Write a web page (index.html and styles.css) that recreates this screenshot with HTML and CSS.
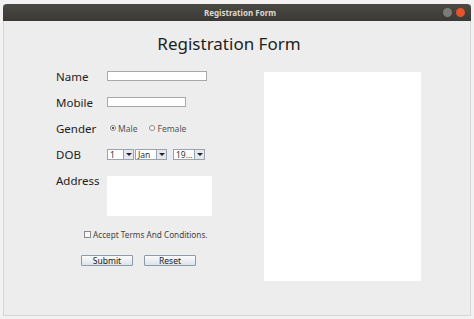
FILE: index.html
```html
<!DOCTYPE html>
<html lang="en">
<head>
    <meta charset="UTF-8">
    <meta name="viewport" content="width=device-width, initial-scale=1.0">
    <title>Registration Form</title>
    <link rel="stylesheet" href="styles.css">
</head>
<body>
    <div class="window">
        <div class="titlebar">
            <span class="titlebar-text">Registration Form</span>
            <div class="titlebar-buttons">
                <span class="tb-btn min"></span>
                <span class="tb-btn close"></span>
            </div>
        </div>

        <div class="content">
            <h1 class="form-title">Registration Form</h1>

            <div class="main">
                <form class="form" id="regForm">
                    <div class="rows">
                        <label class="label">Name</label>
                        <div class="field"><span class="text-input name-input"></span></div>

                        <label class="label">Mobile</label>
                        <div class="field"><span class="text-input mobile-input"></span></div>

                        <label class="label">Gender</label>
                        <div class="field radios">
                            <span class="radio-item"><span class="radio checked"></span>Male</span>
                            <span class="radio-item"><span class="radio"></span>Female</span>
                        </div>

                        <label class="label">DOB</label>
                        <div class="field combos">
                            <span class="combo combo-day"><span class="combo-value">1</span><span class="combo-arrow"></span></span>
                            <span class="combo combo-month"><span class="combo-value">Jan</span><span class="combo-arrow"></span></span>
                            <span class="combo combo-year"><span class="combo-value">19...</span><span class="combo-arrow"></span></span>
                        </div>

                        <label class="label address-label">Address</label>
                        <div class="field address-field"><span class="textarea"></span></div>
                    </div>

                    <div class="terms">
                        <span class="checkbox"></span>
                        <span>Accept Terms And Conditions.</span>
                    </div>

                    <div class="actions">
                        <button type="button" class="btn">Submit</button>
                        <button type="button" class="btn">Reset</button>
                    </div>
                </form>

                <div class="output-panel"></div>
            </div>
        </div>
    </div>
</body>
</html>
```

FILE: styles.css
```css
* {
    margin: 0;
    padding: 0;
    box-sizing: border-box;
}

body {
    width: 474px;
    height: 319px;
    background: #f2f2f2;
    font-family: "Noto Sans", "DejaVu Sans", sans-serif;
    overflow: hidden;
    padding: 4px 3px 3px 3px;
}

.window {
    height: 312px;
    background: #ededed;
    border: 1px solid #d6d6d6;
    border-top: none;
    display: flex;
    flex-direction: column;
}

.titlebar {
    height: 17px;
    background: linear-gradient(to bottom, #4a4944, #3a3935);
    border-radius: 4px 4px 0 0;
    display: flex;
    align-items: center;
    justify-content: center;
    position: relative;
    margin: 0 -1px;
}

.titlebar-text {
    color: #dcd9d2;
    font-size: 8px;
    font-weight: bold;
    margin-left: 6px;
}

.titlebar-buttons {
    position: absolute;
    right: 6px;
    top: 4px;
    display: flex;
    gap: 4px;
}

.tb-btn {
    width: 9px;
    height: 9px;
    border-radius: 50%;
}

.tb-btn.min {
    background: #7c7b76;
}

.tb-btn.close {
    background: #e5542a;
}

.content {
    flex: 1;
    display: flex;
    flex-direction: column;
}

.form-title {
    font-size: 17px;
    font-weight: normal;
    color: #1e1e1e;
    text-align: center;
    line-height: 20px;
    padding-top: 13px;
    margin-bottom: 9px;
    margin-right: 16px;
}

.main {
    display: flex;
    padding-left: 52px;
}

.form {
    width: 208px;
}

.rows {
    display: grid;
    grid-template-columns: 51px auto;
    grid-auto-rows: 26px;
    align-items: center;
}

.label {
    font-size: 11.5px;
    color: #222;
}

.field {
    display: flex;
    align-items: center;
}

.text-input {
    display: block;
    height: 10px;
    background: #fff;
    border: 1px solid #a9a9a9;
}

.name-input {
    width: 100px;
}

.mobile-input {
    width: 79px;
}

.radios {
    font-size: 8.5px;
    color: #555;
    gap: 12px;
    padding-left: 3px;
}

.radio-item {
    display: flex;
    align-items: center;
    gap: 2px;
}

.radio {
    width: 6px;
    height: 6px;
    border: 1px solid #888;
    border-radius: 50%;
    background: #fff;
    position: relative;
}

.radio.checked::after {
    content: "";
    position: absolute;
    left: 1px;
    top: 1px;
    width: 2px;
    height: 2px;
    border-radius: 50%;
    background: #222;
}

.combos {
    gap: 1px;
}

.combo {
    display: flex;
    height: 11px;
    background: #fff;
    border: 1px solid #9aa4b0;
    font-size: 8.5px;
    color: #333;
    line-height: 9px;
}

.combo-value {
    flex: 1;
    padding-left: 2px;
    overflow: hidden;
    white-space: nowrap;
}

.combo-arrow {
    width: 10px;
    background: #e4e8ee;
    border-left: 1px solid #9aa4b0;
    position: relative;
}

.combo-arrow::after {
    content: "";
    position: absolute;
    left: 2px;
    top: 3px;
    border-left: 3px solid transparent;
    border-right: 3px solid transparent;
    border-top: 3px solid #222;
}

.combo-day {
    width: 27px;
}

.combo-month {
    width: 32px;
}

.combo-year {
    width: 32px;
    margin-left: 5px;
}

.address-label,
.address-field {
    align-self: start;
    margin-top: 8px;
}

.address-label {
    margin-top: 6px;
}

.rows .address-field {
    height: 41px;
}

.textarea {
    display: block;
    width: 105px;
    height: 40px;
    background: #fff;
}

.terms {
    display: flex;
    align-items: center;
    gap: 2px;
    font-size: 8.2px;
    color: #444;
    margin-top: 36px;
    padding-left: 28px;
}

.checkbox {
    width: 7px;
    height: 7px;
    border: 1px solid #8a8a8a;
    background: #f7f7f7;
}

.actions {
    display: flex;
    gap: 11px;
    margin-top: 15px;
    padding-left: 25px;
}

.btn {
    width: 52px;
    height: 11px;
    font-family: inherit;
    font-size: 8.5px;
    line-height: 9px;
    color: #222;
    background: linear-gradient(to bottom, #fbfbfb, #dde3ea);
    border: 1px solid #8d9aa8;
    border-radius: 1px;
}

.output-panel {
    width: 157px;
    height: 209px;
    margin-top: 9px;
    background: #fff;
}
```
